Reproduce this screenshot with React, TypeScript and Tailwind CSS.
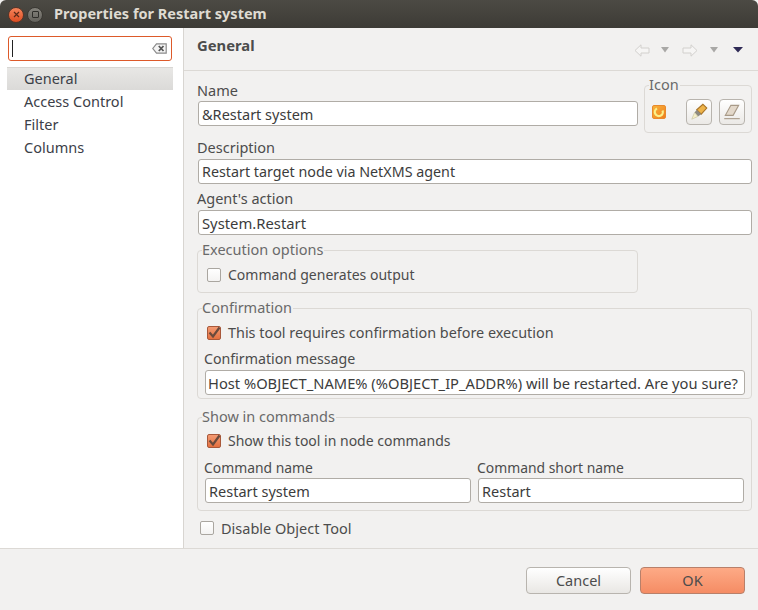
import React from "react";

const labelClass = "text-[#4c4c4c] leading-[20px] block";
const inputClass =
  "block h-[25px] rounded-[3px] border border-[#b0aca6] bg-white pr-[2px] text-[#3c3c3c] outline-none font-['Noto_Sans',sans-serif]";

function Check({ checked, label, size = "text-[14.5px]" }: { checked?: boolean; label: string; size?: string }) {
  return (
    <div className="flex items-center gap-[7px] h-[20px]">
      {checked ? (
        <span className="w-[14px] h-[14px] rounded-[2px] border border-[#a8583a] bg-gradient-to-b from-[#f39a72] to-[#e4703f] flex items-center justify-center">
          <svg width="14" height="14" viewBox="0 0 14 14" className="overflow-visible">
            <path d="M2.5 6.5 L6 10.5 L12.5 1.5" fill="none" stroke="#6a4a3c" strokeWidth="2.2" />
          </svg>
        </span>
      ) : (
        <span className="w-[14px] h-[14px] rounded-[2px] border border-[#aaa6a0] bg-gradient-to-b from-white to-[#f4f3f2]" />
      )}
      <span className={labelClass + " -mt-[1px] " + size}>{label}</span>
    </div>
  );
}

function Group({ title, className, children }: { title: string; className?: string; children: React.ReactNode }) {
  return (
    <fieldset className={"rounded-[4px] border border-[#dcd9d5] " + (className ?? "")}>
      <legend className="ml-[4px] pr-[1px] text-[14.5px] leading-[16px] text-[#6a6a6a] -translate-y-px">{title}</legend>
      {children}
    </fieldset>
  );
}

function ClearIcon() {
  return (
    <svg width="15" height="11" viewBox="0 0 15 11">
      <path d="M4.5 .8 H14.2 V10.2 H4.5 L.8 5.5 Z" fill="#f4f4f4" stroke="#8a8a8a" strokeWidth="1.2" />
      <path d="M6.8 3 L11.5 8 M11.5 3 L6.8 8" stroke="#555" strokeWidth="1.8" />
    </svg>
  );
}

function NavArrow({ flip, className }: { flip?: boolean; className?: string }) {
  return (
    <svg width="16" height="13" viewBox="0 0 16 13" className={(flip ? "-scale-x-100 " : "") + (className ?? "")}>
      <path d="M7 .8 L1 6.5 L7 12.2 V9 H15 V4 H7 Z" fill="#f6f5f4" stroke="#d2d0cd" strokeWidth="1" />
    </svg>
  );
}

function Caret({ color = "#a9a8a6", half = 4, className }: { color?: string; half?: number; className?: string }) {
  return (
    <svg width="14" height="6" viewBox="0 0 14 6" className={className}>
      <path d={`M${7 - half} 0 H${7 + half} L7 5.5 Z`} fill={color} />
    </svg>
  );
}

function ToolButton({ children }: { children: React.ReactNode }) {
  return (
    <button className="w-[26px] h-[26px] rounded-[4px] border border-[#b8b4ae] bg-gradient-to-b from-white to-[#ebe9e6] flex items-center justify-center">
      {children}
    </button>
  );
}

export default function App() {
  return (
    <div className="w-[758px] h-[610px] overflow-hidden flex flex-col bg-[#f2f1f0] font-['Noto_Sans',sans-serif]">
      {/* title bar */}
      <div className="h-[28px] shrink-0 rounded-t-[6px] bg-gradient-to-b from-[#4c4a44] to-[#3d3b36] flex items-center pl-[8px] pt-[1px]">
        <span className="w-[16px] h-[16px] rounded-full bg-gradient-to-b from-[#f6845a] to-[#dd4c1f] border border-[#5a3528] flex items-center justify-center">
          <svg width="7" height="7" viewBox="0 0 7 7">
            <path d="M1 1 L6 6 M6 1 L1 6" stroke="#5c2a18" strokeWidth="1.2" />
          </svg>
        </span>
        <span className="ml-[3px] w-[16px] h-[16px] rounded-full bg-gradient-to-b from-[#85837c] to-[#64625c] border border-[#3a3833] flex items-center justify-center">
          <span className="w-[7px] h-[7px] border border-[#2f2e2a] rounded-[1px]" />
        </span>
        <span className="ml-[11px] -mt-[1px] text-[14.5px] font-bold text-[#dfdbd2]">Properties for Restart system</span>
      </div>

      <div className="flex-1 flex min-h-0">
        {/* sidebar */}
        <div className="w-[184px] shrink-0 bg-white border-r border-[#d8d5d1] pt-[8px] px-[7px]">
          <div className="h-[25px] ml-[1px] w-[164px] rounded-[3px] border border-[#dd5a2a] bg-white flex items-center justify-between pl-[3px] pr-[4px]">
            <span className="w-px h-[17px] bg-[#222]" />
            <ClearIcon />
          </div>
          <div className="mt-[6px] w-[166px] border-t border-[#d8d6d3] text-[14.5px] text-[#3c4048]">
            <div className="h-[22px] pl-[17px] leading-[20px] bg-gradient-to-b from-[#e8e7e5] to-[#dbdad8]">General</div>
            <div className="h-[23px] pl-[17px] leading-[23px]">Access Control</div>
            <div className="h-[23px] pl-[17px] leading-[23px]">Filter</div>
            <div className="h-[23px] pl-[17px] leading-[23px]">Columns</div>
          </div>
        </div>

        {/* page */}
        <div className="flex-1 min-w-0 flex flex-col">
          <div className="h-[43px] shrink-0 border-b border-[#dcd9d5] flex justify-between pl-[13px] pr-[13px]">
            <span className="mt-[7px] text-[14.8px] leading-[20px] font-bold text-[#4c4c4c]">General</span>
            <div className="flex items-center mt-[15px] h-[14px]">
              <NavArrow />
              <Caret className="ml-[8px]" />
              <NavArrow flip className="ml-[10px]" />
              <Caret className="ml-[9px]" />
              <Caret color="#2f2a55" half={5} className="ml-[10px]" />
            </div>
          </div>

          <div className="pl-[13px] pr-[6px] flex flex-col">
            {/* name + icon */}
            <div className="flex gap-[6px] h-[64px]">
              <div className="w-[441px] pt-[9px]">
                <span className={labelClass + " text-[14.5px] mb-px"}>Name</span>
                <input readOnly value="&Restart system" className={inputClass + " ml-[1px] w-[440px] pl-[3px] text-[14.5px]"} />
              </div>
              <Group title="Icon" className="w-[108px] h-[56px] mt-[6px]">
                <div className="flex items-center mt-[6px] pl-[7px]">
                  <span className="w-[14px] h-[14px] rounded-[2px] border border-[#e88a2c] bg-gradient-to-br from-[#f8b23a] to-[#ee7f1e] flex items-center justify-center">
                    <svg width="12" height="12" viewBox="0 0 12 12">
                      <path d="M4 2.5 A4 4 0 1 0 9.5 4.5" fill="none" stroke="#fbf08a" strokeWidth="2.2" />
                    </svg>
                  </span>
                  <span className="ml-[20px]">
                    <ToolButton>
                      <svg width="20" height="20" viewBox="0 0 18 18">
                        <path d="M7 7 L12.5 2 L16 5.5 L11 11 Z" fill="#eeb44a" stroke="#a87428" strokeWidth="1" />
                        <path d="M7 7 L11 11 L8 13 L5 9.5 Z" fill="#8e8a80" />
                        <path d="M5 9.5 L8 13 L2.5 15.5 Z" fill="#f5efc8" stroke="#c9c2a0" strokeWidth=".6" />
                      </svg>
                    </ToolButton>
                  </span>
                  <span className="ml-[7px]">
                    <ToolButton>
                      <svg width="20" height="20" viewBox="0 0 18 18">
                        <path d="M8 3 H15 L10 12 H3 Z" fill="#e3d8ca" stroke="#a89a88" strokeWidth="1" />
                        <path d="M2 15 H16" stroke="#a89a88" strokeWidth="1" />
                      </svg>
                    </ToolButton>
                  </span>
                </div>
              </Group>
            </div>

            <span className={labelClass + " text-[14.5px] mt-[2px] mb-[2px]"}>Description</span>
            <input readOnly value="Restart target node via NetXMS agent" className={inputClass + " ml-[1px] w-[554px] pl-[3px] text-[14.3px]"} />

            <span className={labelClass + " text-[14.5px] mt-[4px] mb-[2px]"}>Agent's action</span>
            <input readOnly value="System.Restart" className={inputClass + " ml-[1px] w-[554px] pl-[3px] text-[14.8px]"} />

            <Group title="Execution options" className="w-[441px] h-[51px] mt-[7px]">
              <div className="mt-[7px] pl-[9px]">
                <Check label="Command generates output" size="text-[14px]" />
              </div>
            </Group>

            <Group title="Confirmation" className="h-[99px] mt-[7px]">
              <div className="mt-[7px] pl-[9px]">
                <Check checked label="This tool requires confirmation before execution" size="text-[14.4px]" />
              </div>
              <span className={labelClass + " text-[14.2px] mt-[6px] mb-px ml-[6px]"}>Confirmation message</span>
              <input
                readOnly
                value="Host %OBJECT_NAME% (%OBJECT_IP_ADDR%) will be restarted. Are you sure?"
                className={inputClass + " ml-[7px] w-[540px] pl-[2px] text-[14.7px]"}
              />
            </Group>

            <Group title="Show in commands" className="h-[102px] mt-[10px]">
              <div className="mt-[6px] pl-[9px]">
                <Check checked label="Show this tool in node commands" size="text-[14px]" />
              </div>
              <div className="grid grid-cols-[266px_266px] gap-x-[7px] mt-[7px] ml-[7px]">
                <div>
                  <span className={labelClass + " text-[13.9px] -ml-[1px]"}>Command name</span>
                  <input readOnly value="Restart system" className={inputClass + " w-full pl-[3px] text-[14.5px]"} />
                </div>
                <div>
                  <span className={labelClass + " text-[13.9px] -ml-[1px]"}>Command short name</span>
                  <input readOnly value="Restart" className={inputClass + " w-full pl-[3px] text-[14.5px]"} />
                </div>
              </div>
            </Group>

            <div className="mt-[7px] ml-[3px]">
              <Check label="Disable Object Tool" />
            </div>
          </div>
        </div>
      </div>

      {/* buttons */}
      <div className="h-[62px] shrink-0 border-t border-[#dcd9d5] flex justify-end gap-[9px] pt-[18px] pr-[13px]">
        <button className="w-[105px] h-[27px] rounded-[4px] border border-[#b8b4ae] bg-gradient-to-b from-white to-[#e9e7e4] text-[14.5px] text-[#4c4c4c]">
          Cancel
        </button>
        <button className="w-[105px] h-[27px] rounded-[4px] border border-[#b8806a] bg-gradient-to-b from-[#fdaa86] to-[#f58c64] text-[14.5px] text-[#4c4c4c]">
          OK
        </button>
      </div>
    </div>
  );
}
